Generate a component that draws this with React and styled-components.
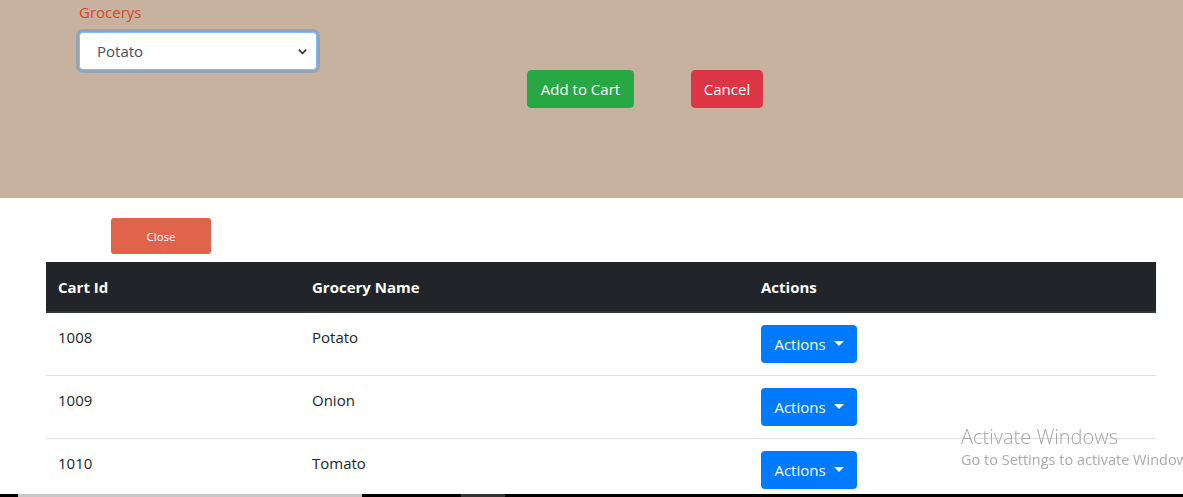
import React from "react";
import styled, { createGlobalStyle } from "styled-components";

const GlobalStyle = createGlobalStyle`
  * { box-sizing: border-box; }
  html, body { margin: 0; padding: 0; }
  body {
    font-family: "Open Sans", "Noto Sans", sans-serif;
    font-size: 15px;
    line-height: 24px;
    color: #212529;
    background: #fff;
    overflow: hidden;
  }
`;

const TopPanel = styled.section`
  height: 198px;
  background: #c6b29f;
  display: flex;
  align-items: flex-start;
  padding-left: 79px;
`;

const FormGroup = styled.div`
  display: flex;
  flex-direction: column;
  width: 238px;
`;

const Label = styled.label`
  color: #d4472b;
  font-size: 15px;
  line-height: 24px;
  margin-bottom: 8px;
`;

const SelectWrap = styled.div`
  height: 38px;
  background: #fff;
  border: 1px solid #80bdff;
  border-radius: 4px;
  box-shadow: 0 0 0 3px rgba(0, 123, 255, 0.25);
  display: flex;
  align-items: center;
  padding: 0 8px 0 17px;
  color: #495057;
  font-size: 15px;
`;

const SelectText = styled.span`
  flex: 1;
`;

const Chevron = styled.svg`
  width: 11px;
  height: 11px;
`;

const ButtonRow = styled.div`
  display: flex;
  gap: 57px;
  margin-top: 70px;
  margin-left: 210px;
`;

const Btn = styled.button`
  font-family: inherit;
  font-size: 15px;
  line-height: 24px;
  height: 38px;
  width: ${(p) => p.$w}px;
  padding: 0;
  border: 1px solid ${(p) => p.$bg};
  border-radius: 4px;
  background: ${(p) => p.$bg};
  color: #fff;
  cursor: pointer;
`;

const Main = styled.main`
  padding: 20px 27px 0 46px;
`;

const CloseBtn = styled.button`
  font-family: inherit;
  font-size: 11.5px;
  width: 100px;
  height: 36px;
  margin-left: 65px;
  border: none;
  border-radius: 3px;
  background: #e0634c;
  color: #fff;
  display: block;
`;

const Table = styled.table`
  margin-top: 8px;
  width: 1110px;
  border-collapse: collapse;
  table-layout: fixed;
`;

const Th = styled.th`
  background: #212529;
  color: #fff;
  text-align: left;
  font-weight: 700;
  font-size: 15px;
  padding: 13px 12px 12px 12px;
  line-height: 24px;
  border-bottom: 2px solid #32383e;
  width: ${(p) => p.$w}px;
`;

const Td = styled.td`
  padding: 12px;
  vertical-align: top;
  border-top: 1px solid #dee2e6;
  font-size: 15px;
  line-height: 24px;
  color: #212529;
`;

const ActionBtn = styled.button`
  font-family: inherit;
  font-size: 15px;
  width: 96px;
  height: 38px;
  border: none;
  border-radius: 4px;
  background: #007bff;
  color: #fff;
  display: inline-flex;
  align-items: center;
  justify-content: center;
  padding: 0;
  cursor: pointer;
`;

const Caret = styled.span`
  display: inline-block;
  margin-left: 8px;
  margin-top: -2px;
  border-top: 5px solid #fff;
  border-left: 5px solid transparent;
  border-right: 5px solid transparent;
`;

const Watermark = styled.div`
  position: fixed;
  left: 961px;
  top: 423px;
  white-space: nowrap;
  pointer-events: none;
`;

const WmTitle = styled.div`
  font-family: "Open Sans", sans-serif;
  font-weight: 300;
  font-size: 20px;
  line-height: 27px;
  color: #a6a6a6;
`;

const WmSub = styled.div`
  font-family: "Open Sans", sans-serif;
  font-size: 14.5px;
  line-height: 20px;
  color: #aaaaaa;
`;

const ScrollStrip = styled.div`
  position: fixed;
  left: 0;
  right: 0;
  bottom: 0;
  height: 3px;
  background: #000;
`;

const ScrollThumb = styled.div`
  position: absolute;
  top: 0;
  height: 3px;
  background: ${(p) => p.$c};
`;

const rows = [
  { id: 1008, name: "Potato" },
  { id: 1009, name: "Onion" },
  { id: 1010, name: "Tomato" },
];

export default function App() {
  return (
    <>
      <GlobalStyle />
      <TopPanel>
        <FormGroup>
          <Label>Grocerys</Label>
          <SelectWrap>
            <SelectText>Potato</SelectText>
            <Chevron viewBox="0 0 12 12">
              <path d="M2 4l4 4 4-4" fill="none" stroke="#333" strokeWidth="1.8" />
            </Chevron>
          </SelectWrap>
        </FormGroup>
        <ButtonRow>
          <Btn $bg="#28a745" $w={107}>Add to Cart</Btn>
          <Btn $bg="#dc3545" $w={72}>Cancel</Btn>
        </ButtonRow>
      </TopPanel>
      <Main>
        <CloseBtn>Close</CloseBtn>
        <Table>
          <thead>
            <tr>
              <Th $w={254}>Cart Id</Th>
              <Th $w={449}>Grocery Name</Th>
              <Th $w={407}>Actions</Th>
            </tr>
          </thead>
          <tbody>
            {rows.map((r) => (
              <tr key={r.id}>
                <Td>{r.id}</Td>
                <Td>{r.name}</Td>
                <Td>
                  <ActionBtn>
                    Actions
                    <Caret />
                  </ActionBtn>
                </Td>
              </tr>
            ))}
          </tbody>
        </Table>
      </Main>
      <Watermark>
        <WmTitle>Activate Windows</WmTitle>
        <WmSub>Go to Settings to activate Windows.</WmSub>
      </Watermark>
      <ScrollStrip>
        <ScrollThumb $c="#c8c8c8" style={{ left: 18, width: 344 }} />
        <ScrollThumb $c="#333" style={{ left: 461, width: 44 }} />
      </ScrollStrip>
    </>
  );
}
